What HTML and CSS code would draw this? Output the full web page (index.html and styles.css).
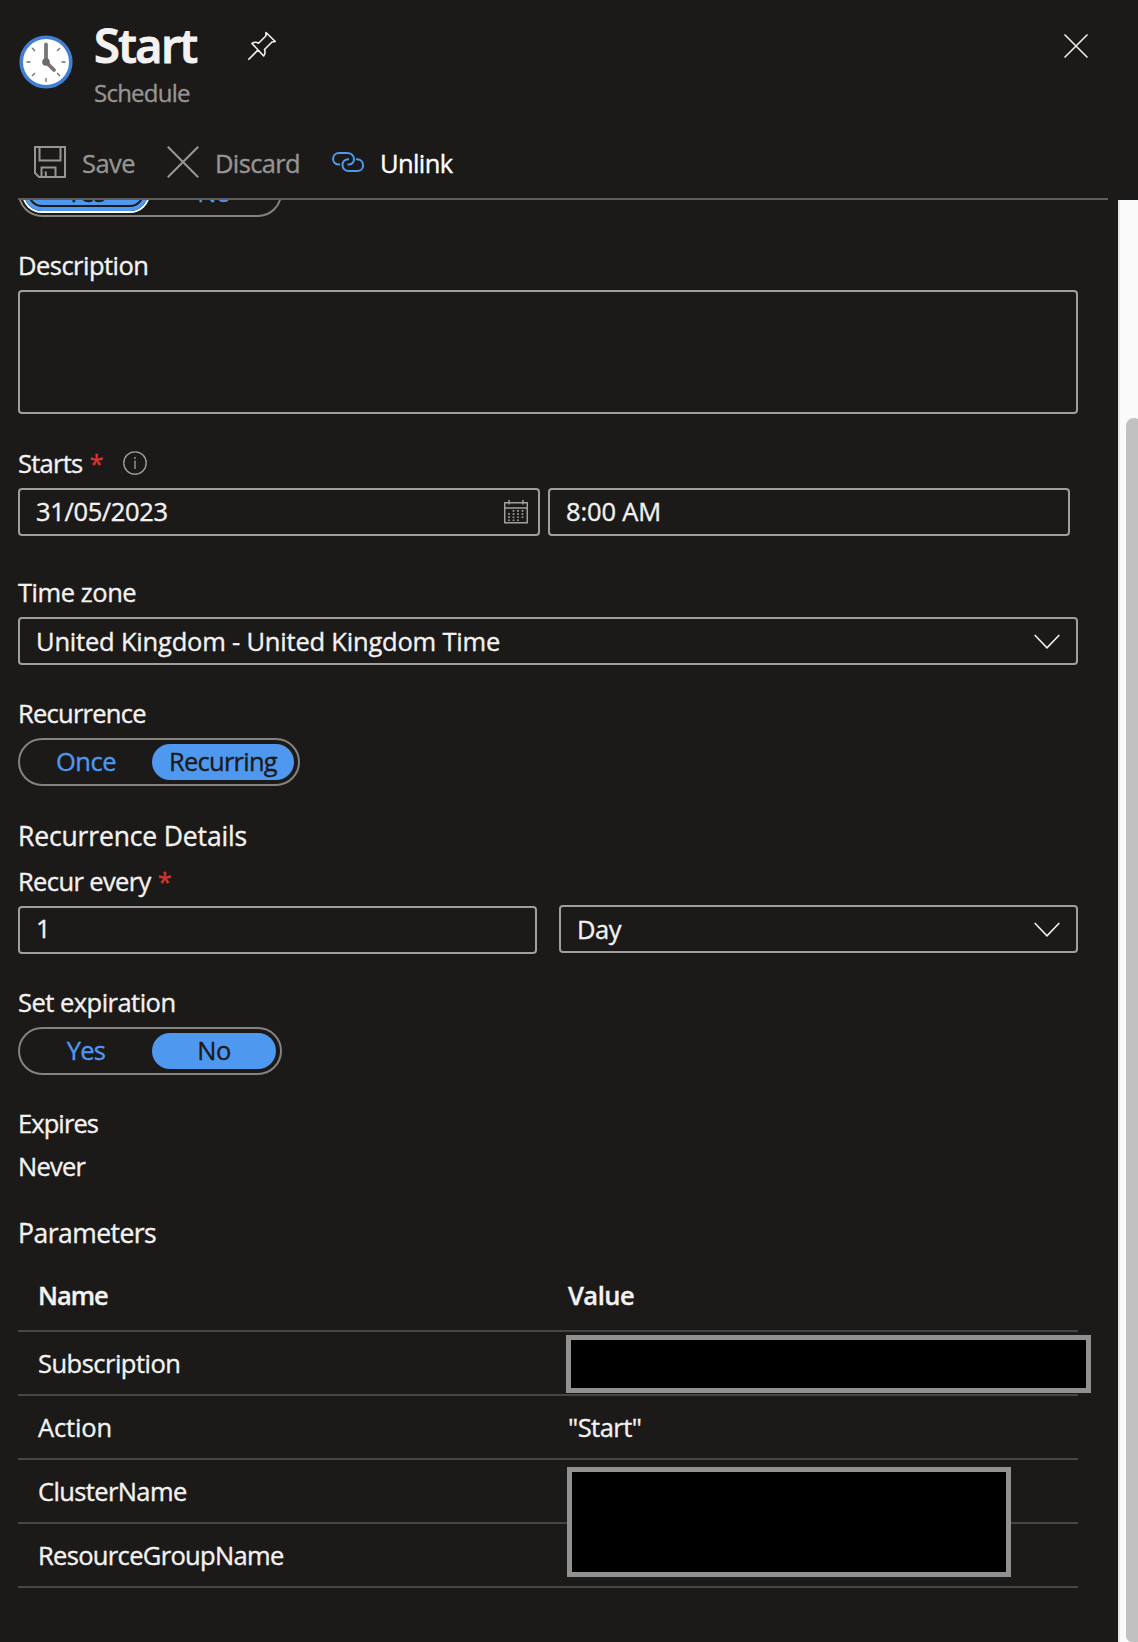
FILE: index.html
```html
<!DOCTYPE html>
<html lang="en">
<head>
<meta charset="utf-8">
<title>Start - Schedule</title>
<link rel="stylesheet" href="styles.css">
</head>
<body>
<div class="blade">
  <header class="header">
    <div class="heading">
      <svg class="clock" width="54" height="54" viewBox="0 0 54 54" fill="none">
        <circle cx="27" cy="27" r="24.8" fill="#fff" stroke="#3f7fd4" stroke-width="3.6"/>
        <path d="M27 43v4M7.500 27h4M42.500 27h4M13 13l3 3M41 13l-3 3M13 41l3-3M41 41l-3-3" stroke="#6d6d6d" stroke-width="1.300"/>
        <path d="M27 9.500V27l8 8" stroke="#767676" stroke-width="3.800" stroke-linecap="round"/>
        <circle cx="27" cy="27" r="3.800" fill="#6b6b6b"/>
      </svg>
      <div class="titles">
        <h1 class="title">Start</h1>
        <div class="subtitle">Schedule</div>
      </div>
      <svg class="pin" width="30" height="30" viewBox="0 0 30 30" fill="none" stroke="#f3f2f1" stroke-width="1.600" stroke-linejoin="round">
        <path d="M1.300 28.700 11 19M5 12.500 16.700 25C18.200 23 18.500 21 17.500 18.500L25 11L28.300 10.500L19 1.500L18.800 5L11.500 12.200C9.500 11 7 11 5 12.500Z"/>
      </svg>
      <svg class="close" width="24" height="24" viewBox="0 0 24 24" fill="none" stroke="#f3f2f1" stroke-width="1.500"><path d="M.5.500l23 23M23.500.500l-23 23"/></svg>
    </div>
    <div class="toolbar">
      <div class="tool tool-save">
        <svg width="32" height="32" viewBox="0 0 32 32" fill="none" stroke="#979593" stroke-width="2"><path d="M1 1h30v30H5l-4-4ZM5.500 1v13.500h21V1M7.500 31V21.500h14V31M11.800 31v-5.500"/></svg>
        <span class="w-save">Save</span>
      </div>
      <div class="tool tool-discard">
        <svg width="32" height="32" viewBox="0 0 32 32" fill="none" stroke="#979593" stroke-width="2.100"><path d="M.8.800l30.400 30.400M31.200.800.800 31.200"/></svg>
        <span class="w-mid">Discard</span>
      </div>
      <div class="tool tool-unlink">
        <svg width="32" height="20" viewBox="0 0 32 20" fill="none" stroke="#4f98ef" stroke-width="2"><path d="M8 12.500H6.500C-.8 12-.8 1.200 7 1H15C24 1 24 12.500 17 12.500H15.500M24 7.200H25.500C33 8 33 19 25 19H17C8.500 19 8.500 7.500 16 7.200H17"/></svg>
        <span class="w-unlink">Unlink</span>
      </div>
    </div>
  </header>

  <div class="body">
    <main class="content">
      <div class="switch switch-clipped"><span class="option chosen focused w-tight">Yes</span><span class="option">No</span></div>

      <label class="label label-description">Description</label>
      <div class="box textarea"></div>

      <label class="label label-starts"><span class="w-tight">Starts</span><span class="required">*</span>
        <svg class="info" width="24" height="24" viewBox="0 0 24 24" fill="none" stroke="#a3a19f" stroke-width="1.300"><circle cx="12" cy="12" r="11.200"/><path d="M12 9.500V18M12 6v2"/></svg>
      </label>
      <div class="row row-starts">
        <div class="box w-date"><span>31/05/2023</span>
          <svg class="calendar" width="24" height="24" viewBox="0 0 24 24" fill="none" stroke="#a3a19f" stroke-width="1.500"><path d="M.7 2.700h22.600v20H.7ZM.7 8h22.600M5 0v4.500M19 0v4.500"/><path d="M9.500 10v11M14 10v11M18.500 10v9M5 13v8" stroke-width="1.700" stroke-dasharray="1.700 1.500"/></svg>
        </div>
        <div class="box w-none"><span>8:00 AM</span></div>
      </div>

      <label class="label label-zone">Time zone</label>
      <div class="box w-zone"><span>United Kingdom - United Kingdom Time</span>
        <svg class="chevron" width="26" height="16" viewBox="0 0 26 16" fill="none" stroke="#f3f2f1" stroke-width="1.600"><path d="M.7 1l12.300 12.800L25.300 1"/></svg>
      </div>

      <label class="label label-recurrence w-tight">Recurrence</label>
      <div class="switch"><span class="option">Once</span><span class="option chosen wide w-tight">Recurring</span></div>

      <h2 class="section section-recurrence">Recurrence Details</h2>
      <label class="label label-every"><span class="w-every">Recur every</span><span class="required">*</span></label>
      <div class="row row-every">
        <div class="box number"><span>1</span></div>
        <div class="box select"><span>Day</span>
          <svg class="chevron" width="26" height="16" viewBox="0 0 26 16" fill="none" stroke="#f3f2f1" stroke-width="1.600"><path d="M.7 1l12.300 12.800L25.300 1"/></svg>
        </div>
      </div>

      <label class="label label-expiration">Set expiration</label>
      <div class="switch"><span class="option w-tight">Yes</span><span class="option chosen">No</span></div>

      <div class="label label-expires w-loose-tight">Expires</div>
      <div class="label value-expires w-tight">Never</div>

      <h2 class="section section-parameters">Parameters</h2>
      <div class="table">
        <div class="tr head"><span class="w-name">Name</span><span>Value</span></div>
        <div class="tr"><span>Subscription</span><span class="redacted redacted-one"></span></div>
        <div class="tr"><span class="w-none-tight">Action</span><span>"Start"</span></div>
        <div class="tr"><span class="w-every">ClusterName</span><span class="redacted redacted-two"></span></div>
        <div class="tr"><span class="w-group">ResourceGroupName</span><span></span></div>
      </div>
    </main>
    <div class="scrollbar"><div class="thumb"></div></div>
  </div>
</div>
</body>
</html>
```
FILE: styles.css
```css
* { box-sizing: border-box; }

body {
  margin: 0;
  background: #1b1a19;
  color: #f3f2f1;
  font-family: "Open Sans", "Noto Sans", sans-serif;
  font-size: 25.5px;
  letter-spacing: -0.52px;
  -webkit-text-stroke: 0.35px currentColor;
}

.blade {
  display: flex;
  flex-direction: column;
  height: 1642px;
  overflow: hidden;
}

svg { display: block; flex: none; }

/* Header */
.header {
  height: 200px;
  margin: 0 30px 0 18px;
  border-bottom: 2px solid #605e5c;
  flex: none;
}
.heading {
  display: flex;
  height: 138px;
  align-items: flex-start;
}
.clock { margin: 35px 0 0 1px; }
.titles { width: 152px; padding: 14px 0 0 20px; }
.title {
  margin: 0 0 0 1px;
  font-size: 47px;
  font-weight: 600;
  line-height: 62px;
  letter-spacing: -1.6px;
  -webkit-text-stroke: 1.1px currentColor;
}
.subtitle {
  margin: 2px 0 0 1px;
  font-size: 24px;
  line-height: 30px;
  letter-spacing: -0.76px;
  color: #979593;
}
.pin { margin: 31px 0 0 22px; }
.close { margin: 34px 20px 0 auto; }

.toolbar { display: flex; height: 50px; padding-left: 16px; }
.tool {
  display: flex;
  align-items: center;
  line-height: 50px;
  color: #979593;
}
.tool svg { margin-bottom: 2px; }
.tool-save { width: 133px; gap: 16px; }
.tool-discard { width: 165px; gap: 16px; }
.tool-unlink { gap: 16px; color: #fff; }

/* Scrolling body */
.body {
  display: flex;
  flex: 1;
  min-height: 0;
  justify-content: space-between;
  overflow: hidden;
}
.content {
  display: flex;
  flex-direction: column;
  width: 1078px;
  padding-left: 18px;
}
.content > * { flex: none; }

.label { display: flex; line-height: 30px; height: 30px; margin-bottom: 10px; }
.required { color: #d9342e; margin-left: 7px; }
.info { margin: 3px 0 0 20px; }
.label-description { margin-top: 33px; }
.label-starts { margin-top: 34px; }
.label-zone { margin-top: 41px; letter-spacing: -0.45px; }
.label-recurrence { margin-top: 33px; }
.label-every { margin-top: 15px; }
.label-expiration { margin-top: 33px; }
.label-expires { margin: 33px 0 0; }
.value-expires { margin: 13px 0 0; }

.section {
  margin: 0;
  font-size: 26.5px;
  font-weight: 400;
  line-height: 30px;
  height: 30px;
}
.section-recurrence { margin-top: 35px; letter-spacing: -0.15px; }
.section-parameters { margin-top: 37px; }

.box {
  display: flex;
  align-items: center;
  justify-content: space-between;
  height: 48px;
  padding: 0 16px;
  border: 2px solid #a19f9d;
  border-radius: 4px;
}
.textarea { height: 124px; }
.row { display: flex; }
.row .box { flex: 1; }
.row-starts { gap: 8px; margin-right: 8px; }
.row-starts .box { padding: 0 10px 2px 16px; }
.row-every { gap: 22px; }
.row-every .number { padding-bottom: 4px; }
.select { margin-top: -1px; margin-bottom: 1px; }
.calendar { margin-top: 1px; }
.chevron { margin-top: 2px; }

.switch {
  display: flex;
  align-self: flex-start;
  height: 48px;
  padding: 4px;
  border: 2px solid #858380;
  border-radius: 24px;
}
.option {
  width: 124px;
  height: 36px;
  border-radius: 18px;
  line-height: 34px;
  text-align: center;
  color: #4f98ef;
}
.option + .option { margin-left: 4px; }
.chosen { background: #4f98ef; color: #1b1a19; }
.wide { width: 142px; }
.switch-clipped { margin-top: -31px; clip-path: inset(31px 0 0 0); }
.focused {
  box-shadow: inset 0 0 0 4px #4f98ef, inset 0 0 0 6px #1b1a19, 0 0 0 2px #fff;
}

/* Parameters table */
.table { margin-top: 12px; }
.tr {
  display: grid;
  grid-template-columns: 530px 1fr;
  align-items: center;
  height: 64px;
  padding-left: 20px;
  border-bottom: 2px solid #484644;
}
.head { height: 72px; font-weight: 600; }
.redacted {
  position: relative;
  background: #000;
  border: 5px solid #919191;
}
.redacted-one { left: -2px; width: 525px; height: 58px; margin-top: 2px; }
.redacted-two { left: -1px; align-self: start; width: 444px; height: 110px; margin: 7px 0 -60px; }

.scrollbar {
  width: 20px;
  padding: 218px 0 0 6px;
  background: #fafafa;
  border-left: 2px solid #e8e8e8;
}
.thumb { height: 1224px; background: #c1c1c1; border-radius: 8px 8px 6px 6px; width: 16px; }

/* Tracking per text */
.w-save { letter-spacing: -0.55px; }
.w-mid { letter-spacing: -0.65px; }
.w-unlink { letter-spacing: -0.6px; }
.w-tight { letter-spacing: -0.75px; }
.w-loose-tight { letter-spacing: -0.92px; }
.w-every { letter-spacing: -0.62px; }
.w-group { letter-spacing: -0.67px; }
.w-name { letter-spacing: -1px; }
.w-date { letter-spacing: -0.36px; }
.w-zone { letter-spacing: -0.2px; }
.w-none { letter-spacing: -0.15px; }
.w-none-tight { letter-spacing: -0.14px; }
```
